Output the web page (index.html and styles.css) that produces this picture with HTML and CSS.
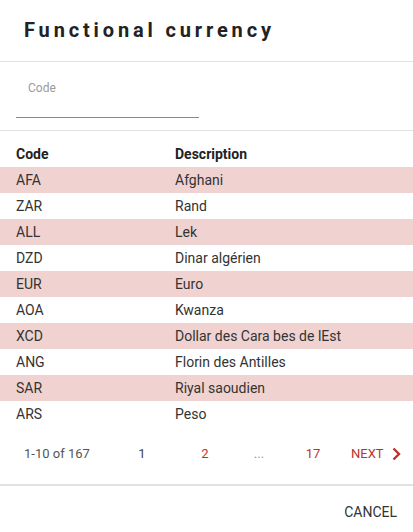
FILE: index.html
```html
<!DOCTYPE html>
<html lang="en">
  <head>
    <title>Functional currency</title>
    <link rel="stylesheet" href="styles.css">
  </head>
  <body>
    <div class="dialog">
      <h1 class="dialog-title">Functional currency</h1>

      <div class="filter">
        <label class="field">
          <span class="field-label">Code</span>
          <span class="field-line"></span>
        </label>
      </div>

      <table class="grid">
        <thead>
          <tr><th class="col-code">Code</th><th>Description</th></tr>
        </thead>
        <tbody>
          <tr class="alt"><td class="col-code">AFA</td><td>Afghani</td></tr>
          <tr><td class="col-code">ZAR</td><td>Rand</td></tr>
          <tr class="alt"><td class="col-code">ALL</td><td>Lek</td></tr>
          <tr><td class="col-code">DZD</td><td>Dinar algérien</td></tr>
          <tr class="alt"><td class="col-code">EUR</td><td>Euro</td></tr>
          <tr><td class="col-code">AOA</td><td>Kwanza</td></tr>
          <tr class="alt"><td class="col-code">XCD</td><td>Dollar des Cara bes de lEst</td></tr>
          <tr><td class="col-code">ANG</td><td>Florin des Antilles</td></tr>
          <tr class="alt"><td class="col-code">SAR</td><td>Riyal saoudien</td></tr>
          <tr><td class="col-code">ARS</td><td>Peso</td></tr>
        </tbody>
      </table>

      <div class="pager">
        <span class="pager-range">1-10 of 167</span>
        <span class="page current">1</span>
        <span class="page link">2</span>
        <span class="page dots">...</span>
        <span class="page link">17</span>
        <span class="next">NEXT
          <svg width="9" height="14" viewBox="0 0 9 14"><path d="M1.5 1.5 L7 7 L1.5 12.5" fill="none" stroke="currentColor" stroke-width="2.4"/></svg>
        </span>
      </div>

      <div class="actions">
        <span class="btn">CANCEL</span>
      </div>
    </div>
  </body>
</html>
```

FILE: styles.css
```css
body {
  margin: 0;
  background: #fff;
  font-family: Roboto, "Liberation Sans", sans-serif;
  color: #333;
}

.dialog {
  width: 413px;
}

.dialog-title {
  margin: 0;
  height: 62px;
  box-sizing: border-box;
  padding: 18px 24px 0;
  font-size: 20px;
  font-weight: 700;
  letter-spacing: 3.85px;
  color: #222;
  border-bottom: 1px solid #e2e2e2;
}

.filter {
  height: 68px;
  padding: 0 16px;
  border-bottom: 1px solid #e2e2e2;
}

.field {
  display: block;
  width: 183px;
  padding-top: 19px;
}

.field-label {
  display: block;
  padding-left: 12px;
  font-size: 12px;
  color: #9a9a9a;
  line-height: 14px;
}

.field-line {
  display: block;
  margin-top: 22px;
  border-bottom: 1px solid #8a8a8a;
}

.grid {
  width: 100%;
  border-collapse: collapse;
  margin-top: 10px;
  font-size: 14px;
}

.grid th {
  text-align: left;
  font-weight: 700;
  color: #222;
  height: 26px;
  padding: 0;
}

.grid td {
  height: 26px;
  padding: 0;
}

.grid .col-code {
  width: 159px;
  padding-left: 16px;
}

.grid .alt {
  background: #f0d3d0;
}

.pager {
  display: grid;
  grid-template-columns: 91px 54px 72px 36px 72px auto;
  align-items: center;
  height: 59px;
  padding-left: 24px;
  padding-bottom: 4px;
  font-size: 13px;
  border-bottom: 2px solid #e2e2e2;
  box-sizing: border-box;
}

.pager-range {
  color: #555;
}

.page {
  text-align: center;
}

.current {
  color: #444;
}

.link {
  color: #c0312b;
}

.dots {
  color: #999;
}

.next {
  display: flex;
  align-items: center;
  gap: 8px;
  margin-left: 2px;
  color: #c0312b;
}

.actions {
  display: flex;
  justify-content: flex-end;
  height: 45px;
  align-items: center;
  padding: 3px 16px 0 0;
}

.btn {
  font-size: 14px;
  color: #333;
}
```
